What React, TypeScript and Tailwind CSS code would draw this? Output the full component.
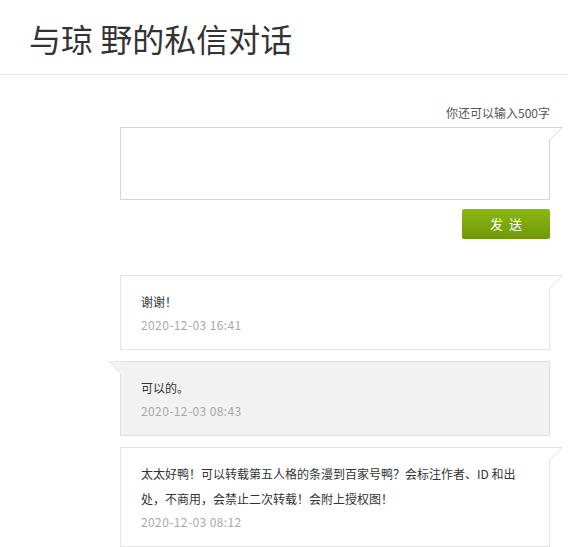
import React from "react";

type Msg = {
  text: string;
  time: string;
  mine: boolean;
};

const messages: Msg[] = [
  { text: "谢谢！", time: "2020-12-03 16:41", mine: true },
  { text: "可以的。", time: "2020-12-03 08:43", mine: false },
  {
    text: "太太好鸭！可以转载第五人格的条漫到百家号鸭？会标注作者、ID 和出处，不商用，会禁止二次转载！会附上授权图！",
    time: "2020-12-03 08:12",
    mine: true,
  },
];

// little corner flag on the top edge of a bubble
const Tail = ({ side, fill, stroke }: { side: "left" | "right"; fill: string; stroke: string }) => {
  if (side === "right") {
    return (
      <svg className="absolute top-[-1px] left-[calc(100%-1px)]" width="16" height="16" viewBox="0 0 16 16">
        <polygon points="0,0 15,0 0,15" fill={fill} />
        <path d="M0 0.5H14.5L0.5 14.5" fill="none" stroke={stroke} strokeWidth="1" />
      </svg>
    );
  }
  return (
    <svg className="absolute top-[-1px] right-[calc(100%-1px)]" width="14" height="14" viewBox="0 0 14 14">
      <polygon points="14,0 0,0 14,14" fill={fill} />
      <path d="M14 0.5H0.5L13.5 13.5" fill="none" stroke={stroke} strokeWidth="1" />
    </svg>
  );
};

const Bubble = ({ msg }: { msg: Msg }) => {
  const bg = msg.mine ? "#ffffff" : "#f2f2f2";
  return (
    <div
      className={
        "relative border pl-[20px] pr-[30px] pt-[13px] pb-[14px] " +
        (msg.mine ? "bg-white border-[#e3e3e3]" : "bg-[#f2f2f2] border-[#e0e0e0]")
      }
    >
      <Tail side={msg.mine ? "right" : "left"} fill={bg} stroke={msg.mine ? "#e3e3e3" : "#e8e8e8"} />
      <p className="text-[12px] leading-[25px] text-[#333]">{msg.text}</p>
      <p className="text-[12px] leading-[21px] tracking-[0.4px] text-[#a8a8a8]">{msg.time}</p>
    </div>
  );
};

export default function App() {
  return (
    <div
      className="min-h-screen bg-white overflow-hidden"
      style={{ fontFamily: '"Microsoft YaHei", "Noto Sans CJK SC", sans-serif' }}
    >
      <div className="h-[75px] border-b border-[#e6e6e6] pl-[29px] pt-[15px]">
        <h1 className="text-[32px] leading-[46px] text-[#333] font-normal">与琼 野的私信对话</h1>
      </div>

      <div className="ml-[120px] w-[430px] pt-[28px]">
        <div className="text-right text-[12px] leading-[20px] text-[#555]">你还可以输入500字</div>

        <div className="relative mt-[4px] h-[73px] border border-[#d6d6d6] bg-white">
          <Tail side="right" fill="#ffffff" stroke="#d6d6d6" />
        </div>

        <div className="mt-[9px] flex justify-end">
          <button className="h-[30px] w-[88px] rounded-[2px] bg-gradient-to-b from-[#8bb815] to-[#6e9905] text-[13px] tracking-[6px] pl-[6px] text-white">
            发送
          </button>
        </div>

        <div className="mt-[36px] flex flex-col gap-[11px]">
          {messages.map((m, i) => (
            <Bubble key={i} msg={m} />
          ))}
        </div>
      </div>
    </div>
  );
}
